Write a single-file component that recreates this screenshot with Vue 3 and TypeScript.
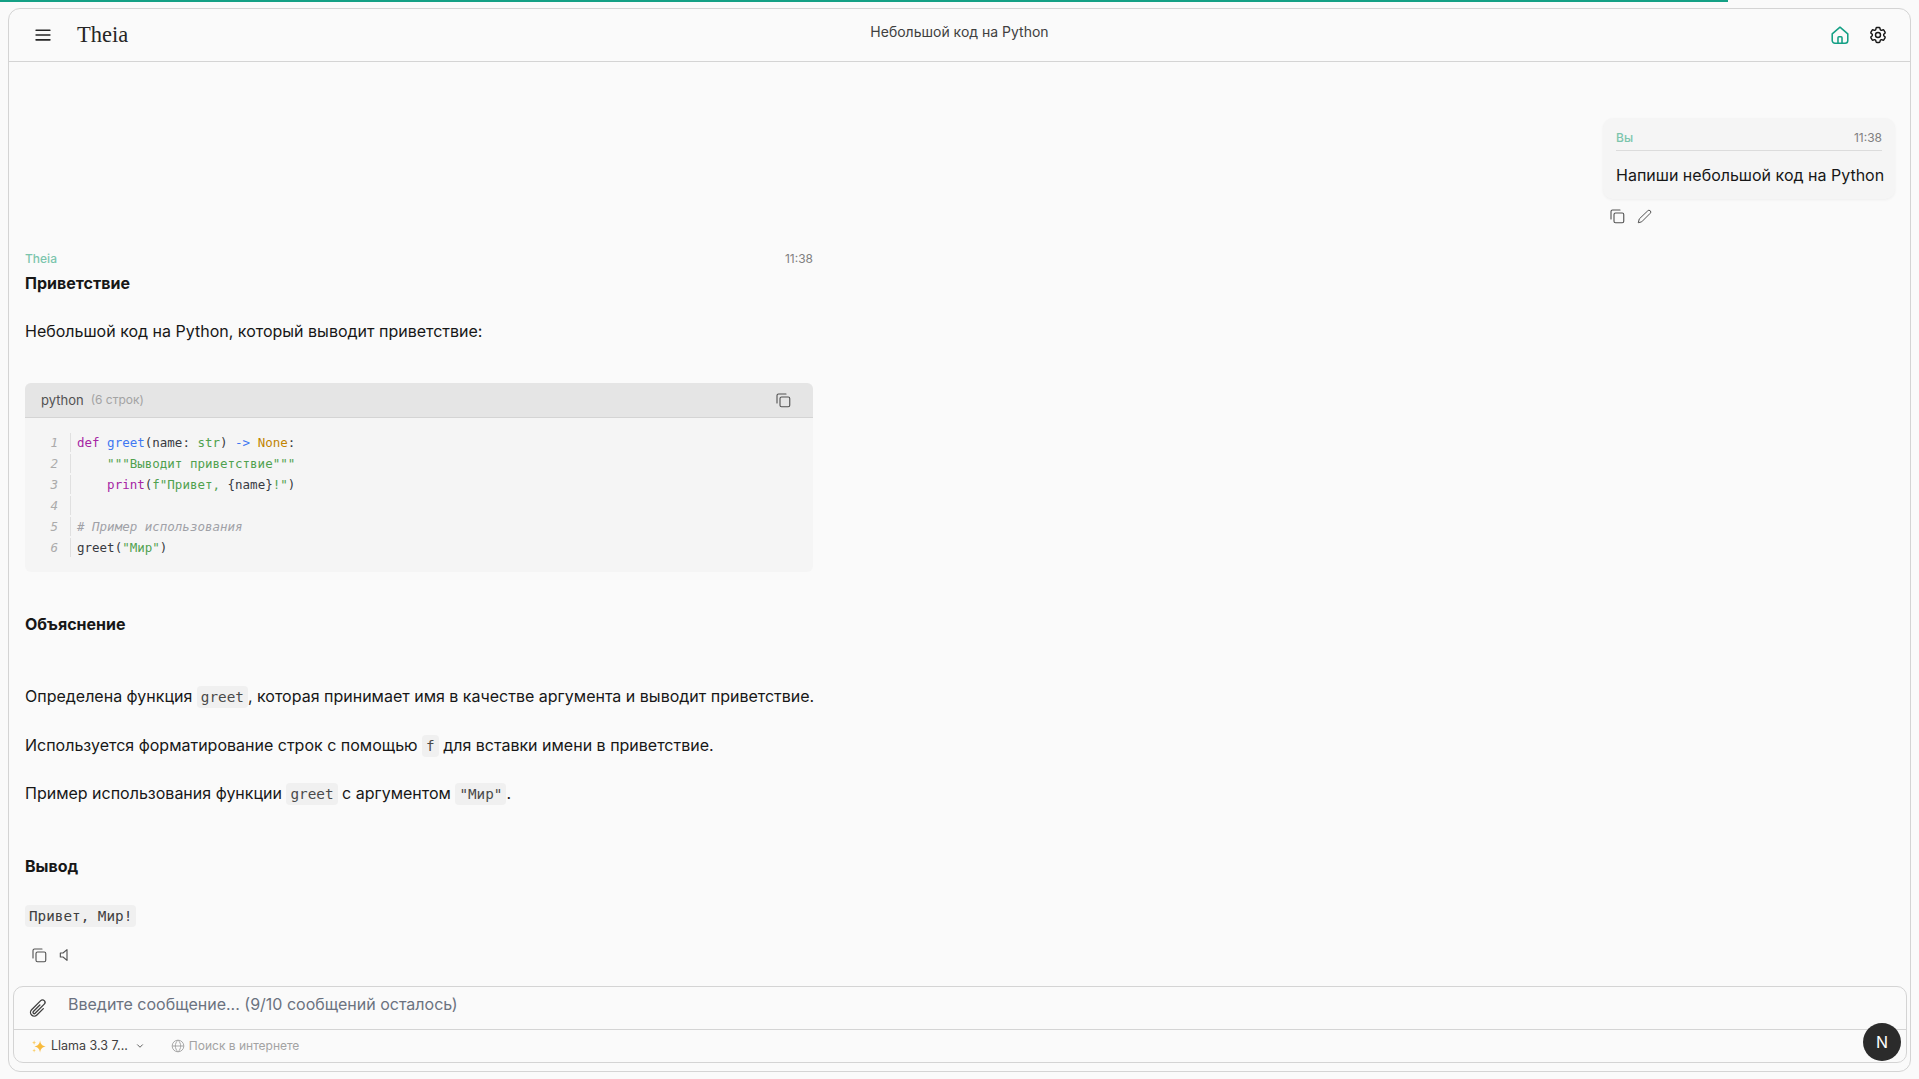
<script setup lang="ts">
interface Tok { t: string; c?: string }
const codeLines: Tok[][] = [
  [{ t: 'def', c: 'kw' }, { t: ' ' }, { t: 'greet', c: 'fn' }, { t: '(name: ' }, { t: 'str', c: 'st' }, { t: ') ' }, { t: '->', c: 'fn' }, { t: ' ' }, { t: 'None', c: 'nu' }, { t: ':' }],
  [{ t: '    ' }, { t: '"""Выводит приветствие"""', c: 'st' }],
  [{ t: '    ' }, { t: 'print', c: 'kw' }, { t: '(' }, { t: 'f"Привет, ', c: 'st' }, { t: '{name}' }, { t: '!"', c: 'st' }, { t: ')' }],
  [],
  [{ t: '# Пример использования', c: 'cm' }],
  [{ t: 'greet(' }, { t: '"Мир"', c: 'st' }, { t: ')' }],
]
</script>

<template>
  <div class="progress"></div>
  <div class="frame">
    <header class="topbar">
      <div class="brand">
        <svg class="menu" viewBox="0 0 24 24" fill="none" stroke="currentColor" stroke-width="2" stroke-linecap="round"><path d="M3.75 6.25h16.5M3.75 12h16.5M3.75 17.75h16.5" /></svg>
        <span class="logo">Theia</span>
      </div>
      <div class="title">Небольшой код на Python</div>
      <div class="top-actions">
        <svg class="ti home" viewBox="0 0 24 24" fill="none" stroke="currentColor" stroke-width="1.7" stroke-linecap="round" stroke-linejoin="round"><path d="M3.5 10.800 12 3.500l8.500 7.300V18a3 3 0 0 1-3 3h-11a3 3 0 0 1-3-3z" /><path d="M9.800 21v-6a1 1 0 0 1 1-1h2.400a1 1 0 0 1 1 1v6" /></svg>
        <svg class="ti gear" viewBox="0 0 24 24" fill="none" stroke="currentColor" stroke-width="1.7" stroke-linecap="round" stroke-linejoin="round"><path d="M9.594 3.94c.09-.542.56-.94 1.11-.94h2.593c.55 0 1.02.398 1.11.94l.213 1.281c.063.374.313.686.645.87.074.04.147.083.22.127.325.196.72.257 1.075.124l1.217-.456a1.125 1.125 0 0 1 1.37.49l1.296 2.247a1.125 1.125 0 0 1-.26 1.431l-1.003.827c-.293.241-.438.613-.43.992a7.723 7.723 0 0 1 0 .255c-.008.378.137.75.43.991l1.004.827c.424.35.534.955.26 1.43l-1.298 2.247a1.125 1.125 0 0 1-1.369.491l-1.217-.456c-.355-.133-.75-.072-1.076.124a6.47 6.47 0 0 1-.22.128c-.331.183-.581.495-.644.869l-.213 1.281c-.09.543-.56.94-1.11.94h-2.594c-.55 0-1.019-.398-1.11-.94l-.213-1.281c-.062-.374-.312-.686-.644-.87a6.52 6.52 0 0 1-.22-.127c-.325-.196-.72-.257-1.076-.124l-1.217.456a1.125 1.125 0 0 1-1.369-.49l-1.297-2.247a1.125 1.125 0 0 1 .26-1.431l1.004-.827c.292-.24.437-.613.43-.991a6.932 6.932 0 0 1 0-.255c.007-.38-.138-.751-.43-.992l-1.004-.827a1.125 1.125 0 0 1-.26-1.43l1.297-2.247a1.125 1.125 0 0 1 1.37-.491l1.216.456c.356.133.751.072 1.076-.124.072-.044.146-.086.22-.128.332-.183.582-.495.644-.869l.214-1.28Z" /><path d="M15 12a3 3 0 1 1-6 0 3 3 0 0 1 6 0Z" /></svg>
      </div>
    </header>

    <main class="chat">
      <div class="user-row">
        <div class="bubble">
          <div class="meta bubble-meta"><span class="who">Вы</span><span class="time">11:38</span></div>
          <div class="bubble-text">Напиши небольшой код на Python</div>
        </div>
        <div class="actions user-actions">
          <svg class="ai" viewBox="0 0 24 24" fill="none" stroke="currentColor" stroke-width="1.5" stroke-linecap="round" stroke-linejoin="round"><rect x="8" y="8" width="13" height="13" rx="2" /><path d="M16 4H6a2 2 0 0 0-2 2v10" /></svg>
          <svg class="ai pencil" viewBox="0 0 24 24" fill="none" stroke="currentColor" stroke-width="1.6" stroke-linecap="round" stroke-linejoin="round"><path d="M17 3a2.850 2.830 0 1 1 4 4L7.500 20.500 2 22l1.500-5.500Z" /></svg>
        </div>
      </div>

      <article class="answer">
        <div class="meta"><span class="who">Theia</span><span class="time">11:38</span></div>
        <h3 class="h-first">Приветствие</h3>
        <p class="intro">Небольшой код на Python, который выводит приветствие:</p>

        <section class="code">
          <div class="code-head">
            <span class="lang">python</span><span class="count">(6 строк)</span>
            <svg class="ai code-copy" viewBox="0 0 24 24" fill="none" stroke="currentColor" stroke-width="1.5" stroke-linecap="round" stroke-linejoin="round"><rect x="8" y="8" width="13" height="13" rx="2" /><path d="M16 4H6a2 2 0 0 0-2 2v10" /></svg>
          </div>
          <div class="code-body">
            <div v-for="(line, i) in codeLines" :key="i" class="line">
              <span class="num">{{ i + 1 }}</span>
              <span class="src"><span v-for="(tok, j) in line" :key="j" :class="tok.c">{{ tok.t }}</span></span>
            </div>
          </div>
        </section>

        <h3 class="h-expl">Объяснение</h3>
        <p class="p-a">Определена функция <code>greet</code>, которая принимает имя в качестве аргумента и выводит приветствие.</p>
        <p class="p-b">Используется форматирование строк с помощью <code>f</code> для вставки имени в приветствие.</p>
        <p class="p-b">Пример использования функции <code>greet</code> с аргументом <code>"Мир"</code>.</p>
        <h3 class="h-out">Вывод</h3>
        <p class="p-b"><code class="out">Привет, Мир!</code></p>
        <div class="actions answer-actions">
          <svg class="ai" viewBox="0 0 24 24" fill="none" stroke="currentColor" stroke-width="1.5" stroke-linecap="round" stroke-linejoin="round"><rect x="8" y="8" width="13" height="13" rx="2" /><path d="M16 4H6a2 2 0 0 0-2 2v10" /></svg>
          <svg class="ai speaker" viewBox="0 0 24 24" fill="none" stroke="currentColor" stroke-width="1.7" stroke-linecap="round" stroke-linejoin="round"><path d="M15 4 9 9H5v6h4l6 5z" /></svg>
        </div>
      </article>
    </main>

    <footer class="composer">
      <div class="input-row">
        <svg class="clip" viewBox="0 0 24 24" fill="none" stroke="currentColor" stroke-width="1.6" stroke-linecap="round" stroke-linejoin="round"><path d="m18.375 12.739-7.693 7.693a4.500 4.500 0 0 1-6.364-6.364l10.940-10.940A3 3 0 1 1 19.500 7.372L8.552 18.320m.009-.010-.010.010m5.699-9.941-7.810 7.810a1.500 1.500 0 0 0 2.112 2.130" /></svg>
        <span class="placeholder">Введите сообщение... (9/10 сообщений осталось)</span>
      </div>
      <div class="tool-row">
        <svg class="spark" viewBox="0 0 24 24"><path fill="#f8bb3e" d="M14.500 2.500c1 6 3 8 9 9.500-6 1.500-8 3.500-9 9.500-1-6-3-8-9-9.500 6-1.500 8-3.500 9-9.500z" /><path fill="#fad06e" d="M5 2c.5 2.500 1.200 3.200 3.500 3.700C6.200 6.200 5.500 7 5 9.500 4.500 7 3.800 6.200 1.500 5.700 3.800 5.200 4.500 4.500 5 2z" /><path fill="#fad06e" d="M5 15c.4 2.200 1 2.800 3 3.200-2 .4-2.600 1-3 3.300-.4-2.300-1-2.900-3-3.300 2-.4 2.600-1 3-3.200z" /></svg>
        <span class="model">Llama 3.3 7...</span>
        <svg class="chev" viewBox="0 0 24 24" fill="none" stroke="currentColor" stroke-width="2.200" stroke-linecap="round" stroke-linejoin="round"><path d="m6 9 6 6 6-6" /></svg>
        <svg class="globe" viewBox="0 0 24 24" fill="none" stroke="currentColor" stroke-width="1.600"><circle cx="12" cy="12" r="10" /><path d="M2 12h20M12 2c3.300 3 4.500 6.500 4.500 10s-1.200 7-4.500 10c-3.300-3-4.500-6.500-4.500-10S8.700 5 12 2z" /></svg>
        <span class="search">Поиск в интернете</span>
      </div>
      <div class="avatar">N</div>
    </footer>
  </div>
</template>

<style>
html, body { margin: 0; background: #fafafa; }
</style>

<style scoped>
.progress {
  position: absolute;
  top: 0;
  left: 0;
  width: 1728px;
  height: 2px;
  background: #14a085;
}
.frame {
  box-sizing: border-box;
  margin: 8px;
  width: 1903px;
  height: 1064px;
  display: flex;
  flex-direction: column;
  border: 1px solid #d4d4d4;
  border-radius: 12px;
  background: #fafafa;
  font-family: Inter, "Noto Sans", sans-serif;
  font-size: 16px;
  line-height: 24px;
  color: #171717;
  overflow: hidden;
}
.topbar {
  flex: none;
  box-sizing: border-box;
  height: 53px;
  display: grid;
  grid-template-columns: 1fr auto 1fr;
  border-bottom: 1px solid #d4d4d4;
}
.brand { display: flex; align-items: center; padding-left: 24px; }
.menu { width: 20px; height: 20px; color: #262626; }
.logo {
  margin-left: 24px;
  font-family: "Liberation Serif", serif;
  font-size: 22.5px;
  color: #262626;
}
.title {
  padding-top: 13px;
  font-size: 14px;
  line-height: 20px;
  color: #404040;
}
.top-actions { display: flex; align-items: center; justify-content: flex-end; gap: 17px; padding-right: 22px; }
.ti { width: 22px; height: 22px; color: #171717; }
.gear { width: 20px; height: 20px; }
.home { color: #14a085; }

.chat {
  flex: 1;
  min-height: 0;
  padding: 56px 15px 0 16px;
}
.user-row { display: flex; flex-direction: column; align-items: flex-end; }
.bubble {
  box-sizing: border-box;
  width: 292px;
  height: 81px;
  padding: 12px 13px;
  border-radius: 10px;
  background: #f5f5f5;
  box-shadow: 0 1px 3px rgba(0, 0, 0, 0.05);
}
.meta {
  display: flex;
  justify-content: space-between;
  font-size: 12px;
  line-height: 16px;
}
.bubble-meta { padding-bottom: 4px; border-bottom: 1px solid #dcdcdc; }
.who { color: #7cc5ad; font-weight: 500; }
.time { color: #808080; }
.bubble-text { margin-top: 12px; white-space: nowrap; }
.actions { display: flex; align-items: center; color: #525252; }
.user-actions { width: 292px; height: 18px; margin-top: 8px; padding-left: 5px; box-sizing: border-box; gap: 11px; }
.ai { width: 18px; height: 18px; flex: none; }
.pencil { width: 15px; height: 15px; }

.answer { width: 788px; margin-top: 26px; }
h3 { margin: 0; font-size: 16px; line-height: 24px; font-weight: 700; }
p { margin: 0; white-space: nowrap; }
.h-first { margin-top: 4px; }
.intro { margin-top: 24px; }
.code { margin-top: 40px; border-radius: 6px; overflow: hidden; background: #f5f5f5; }
.code-head {
  box-sizing: border-box;
  height: 35px;
  display: flex;
  align-items: center;
  padding: 0 21px 0 16px;
  background: #e5e5e5;
  border-bottom: 1px solid #d4d4d4;
  font-size: 13px;
}
.lang { color: #525252; }
.count { margin-left: 7px; font-size: 12px; color: #a3a3a3; }
.code-copy { margin-left: auto; color: #525252; }
.code-body {
  padding: 14px 0 14px;
  font-family: "DejaVu Sans Mono", "Liberation Mono", monospace;
  font-size: 12.5px;
  line-height: 21px;
  color: #383a42;
}
.line { display: flex; height: 21px; }
.num {
  box-sizing: border-box;
  width: 46px;
  height: 19px;
  margin-top: 1px;
  padding-right: 12px;
  border-right: 1px solid #e0e0e0;
  text-align: right;
  font-style: italic;
  line-height: 19px;
  color: #ababab;
}
.src { margin-left: 6px; white-space: pre; }
.kw { color: #a626a4; }
.fn { color: #4078f2; }
.st { color: #50a14f; }
.nu { color: #c18401; }
.cm { color: #a0a1a7; font-style: italic; }

.h-expl { margin-top: 40px; }
.p-a { margin-top: 48px; }
.p-b { margin-top: 24.5px; }
.h-out { margin-top: 49px; }
code {
  padding: 3px 4px;
  border-radius: 4px;
  background: #f0f0f0;
  font-family: "DejaVu Sans Mono", "Liberation Mono", monospace;
  font-size: 14.3px;
  line-height: 1;
  color: #4a4a4a;
}
.out { color: #404040; }
.answer-actions { margin-top: 19px; padding-left: 5px; gap: 9px; height: 18px; }
.speaker { width: 16px; height: 16px; }

.composer {
  flex: none;
  position: relative;
  box-sizing: border-box;
  height: 77px;
  margin: 0 3px 8px 4px;
  border: 1px solid #d4d4d4;
  border-radius: 10px;
}
.input-row {
  box-sizing: border-box;
  height: 43px;
  display: flex;
  border-bottom: 1px solid #d4d4d4;
  padding-left: 14px;
}
.clip { width: 20px; height: 20px; margin-top: 11px; color: #404040; }
.placeholder { margin-left: 20px; margin-top: 5px; color: #6b7280; }
.tool-row {
  height: 32px;
  display: flex;
  align-items: center;
  padding-left: 17px;
  font-size: 12.5px;
}
.spark { width: 15px; height: 15px; }
.model { margin-left: 5px; color: #404040; }
.chev { width: 10px; height: 10px; margin-left: 7px; color: #525252; }
.globe { width: 14px; height: 14px; margin-left: 26px; color: #a3a3a3; }
.search { margin-left: 4px; font-size: 12px; color: #a3a3a3; }
.avatar {
  position: absolute;
  right: 5px;
  bottom: 1px;
  width: 38px;
  height: 38px;
  border-radius: 50%;
  display: flex;
  align-items: center;
  justify-content: center;
  background: #2b2b2b;
  color: #fff;
  font-size: 16px;
}
</style>
